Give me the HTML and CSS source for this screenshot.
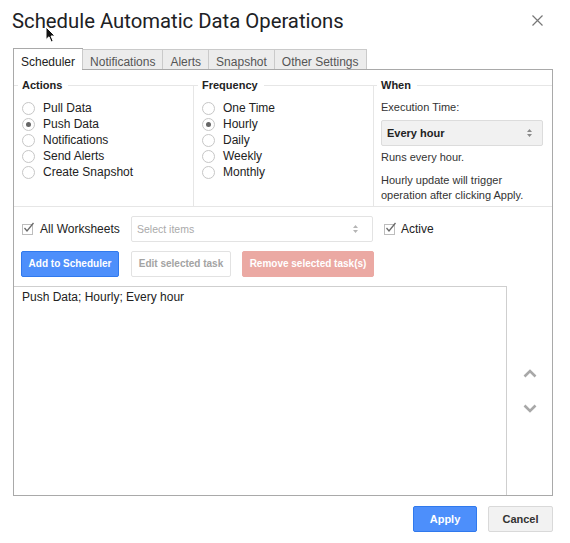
FILE: index.html
```html
<!DOCTYPE html>
<html lang="en">
<head>
<meta charset="utf-8">
<title>Schedule Automatic Data Operations</title>
<link rel="stylesheet" href="styles.css">
</head>
<body>
<div class="dialog">
  <header class="head">
    <h1 class="title">Schedule Automatic Data Operations</h1>
    <button class="close" aria-label="Close">
      <svg width="11" height="11" viewBox="0 0 11 11"><path d="M0.5 0.5 L10.5 10.5 M10.5 0.5 L0.5 10.5" stroke="#777" stroke-width="1.2" fill="none"/></svg>
    </button>
  </header>

  <nav class="tabs">
    <div class="tab active">Scheduler</div>
    <div class="tab">Notifications</div>
    <div class="tab">Alerts</div>
    <div class="tab">Snapshot</div>
    <div class="tab">Other Settings</div>
  </nav>

  <section class="panel">
    <div class="groups">
      <fieldset class="group group-actions">
        <legend>Actions</legend>
        <div class="options">
          <label class="opt"><span class="radio"></span>Pull Data</label>
          <label class="opt"><span class="radio on"></span>Push Data</label>
          <label class="opt"><span class="radio"></span>Notifications</label>
          <label class="opt"><span class="radio"></span>Send Alerts</label>
          <label class="opt"><span class="radio"></span>Create Snapshot</label>
        </div>
      </fieldset>
      <fieldset class="group group-freq">
        <legend>Frequency</legend>
        <div class="options">
          <label class="opt"><span class="radio"></span>One Time</label>
          <label class="opt"><span class="radio on"></span>Hourly</label>
          <label class="opt"><span class="radio"></span>Daily</label>
          <label class="opt"><span class="radio"></span>Weekly</label>
          <label class="opt"><span class="radio"></span>Monthly</label>
        </div>
      </fieldset>
      <fieldset class="group group-when">
        <legend>When</legend>
        <p class="when-label">Execution Time:</p>
        <div class="select select-when">
          <span>Every hour</span>
          <svg class="updown" width="7" height="10" viewBox="0 0 7 10"><path d="M3.5 1 L6 4 L1 4 Z M3.5 9 L6 6 L1 6 Z" fill="#8a8a8a"/></svg>
        </div>
        <p class="when-note">Runs every hour.</p>
        <p class="when-desc">Hourly update will trigger<br>operation after clicking Apply.</p>
      </fieldset>
    </div>

    <div class="filters">
      <label class="check check-all"><span class="box"><svg width="13" height="12" viewBox="0 0 13 12"><path d="M2.5 6 L5 9 L11.5 1" stroke="#6a6a6a" stroke-width="1.3" fill="none"/></svg></span>All Worksheets</label>
      <div class="select select-items">
        <span>Select items</span>
        <svg class="updown" width="7" height="10" viewBox="0 0 7 10"><path d="M3.5 1 L6 4 L1 4 Z M3.5 9 L6 6 L1 6 Z" fill="#b5b5b5"/></svg>
      </div>
      <label class="check check-active"><span class="box"><svg width="13" height="12" viewBox="0 0 13 12"><path d="M2.5 6 L5 9 L11.5 1" stroke="#6a6a6a" stroke-width="1.3" fill="none"/></svg></span>Active</label>
    </div>

    <div class="buttons">
      <button class="btn btn-primary btn-add">Add to Scheduler</button>
      <button class="btn btn-plain btn-edit">Edit selected task</button>
      <button class="btn btn-danger btn-remove">Remove selected task(s)</button>
    </div>

    <div class="tasks">
      <div class="task-list">Push Data; Hourly; Every hour</div>
      <div class="reorder">
        <svg width="14" height="9" viewBox="0 0 14 9"><path d="M1.5 7.5 L7 2 L12.5 7.5" stroke="#a8a8a8" stroke-width="2.6" fill="none"/></svg>
        <svg width="14" height="9" viewBox="0 0 14 9"><path d="M1.5 1.5 L7 7 L12.5 1.5" stroke="#a8a8a8" stroke-width="2.6" fill="none"/></svg>
      </div>
    </div>
  </section>

  <footer class="foot">
    <button class="btn btn-primary btn-apply">Apply</button>
    <button class="btn btn-cancel">Cancel</button>
  </footer>

  <svg class="cursor" width="12" height="18" viewBox="0 0 12 18"><path d="M1 1 L1 13.5 L4 10.8 L6.2 16 L8.2 15.1 L6 10 L10 10 Z" fill="#111" stroke="#fff" stroke-width="1"/></svg>
</div>
</body>
</html>
```

FILE: styles.css
```css
* { box-sizing: border-box; }

body {
  margin: 0;
  background: #fff;
  font-family: "Liberation Sans", Arial, sans-serif;
  color: #222;
}

.dialog {
  position: relative;
  width: 570px;
  height: 543px;
  padding: 8px 18px 0 13px;
}

.head {
  display: flex;
  align-items: center;
  justify-content: space-between;
  height: 24px;
  margin-bottom: 16px;
}

.title {
  margin: 1px 0 0 -1px;
  font: 400 20.3px/24px Roboto, "Liberation Sans", sans-serif;
  color: #202124;
}

.close {
  display: flex;
  padding: 0;
  margin: 0 9px 0 0;
  border: 0;
  background: none;
}

/* Tabs */
.tabs {
  position: relative;
  z-index: 1;
  display: flex;
  align-items: flex-start;
  height: 21px;
}

.tab {
  height: 20px;
  margin-top: 1px;
  margin-right: -1px;
  padding: 4px 7px 0;
  font-size: 12px;
  line-height: 16px;
  color: #555;
  background: #ececec;
  border: 1px solid #cacaca;
  border-bottom: 0;
}

.tab.active {
  height: 22px;
  margin-top: 0;
  padding-top: 5px;
  color: #222;
  background: #fff;
  border-color: #a9a9a9;
}

/* Panel */
.panel {
  width: 540px;
  border: 1px solid #a9a9a9;
}

.groups {
  display: flex;
  height: 137px;
  padding-top: 9px;
}

.group {
  margin: 0;
  min-width: 0;
  padding: 0 0 0 8px;
  border: 0;
  border-top: 1px solid #e6e6e6;
  border-right: 1px solid #e6e6e6;
  border-bottom: 1px solid #e6e6e6;
}

.group-actions { width: 180px; }
.group-freq { width: 180px; }
.group-when { width: 178px; border-right: 0; padding-left: 7px; }

.group legend {
  margin-left: -4px;
  padding: 0 6px 0 4px;
  font: 700 11px/13px "Liberation Sans", Arial, sans-serif;
  color: #222;
}

.options {
  display: flex;
  flex-direction: column;
  margin-top: 8px;
}

.opt {
  display: flex;
  align-items: center;
  gap: 8px;
  height: 16px;
  font-size: 12px;
  color: #222;
}

.radio {
  display: grid;
  place-items: center;
  flex: none;
  width: 13px;
  height: 13px;
  border: 1px solid #c6c6c6;
  border-radius: 50%;
  background: #fff;
}

.radio.on::after {
  content: "";
  width: 5px;
  height: 5px;
  border-radius: 50%;
  background: #666;
}

.when-label,
.when-note,
.when-desc {
  margin: 0;
  font-size: 11px;
  color: #333;
}

.when-label { margin-top: 7px; line-height: 16px; }
.when-note { margin-top: 3px; line-height: 16px; }
.when-desc { margin-top: 8px; line-height: 15px; }

.select {
  display: flex;
  align-items: center;
  justify-content: space-between;
  height: 26px;
  padding: 0 9px 0 5px;
  border-radius: 2px;
}

.select-when {
  width: 162px;
  margin-top: 5px;
  font-weight: 700;
  font-size: 11px;
  color: #222;
  background: #f1f1f1;
  border: 1px solid #dcdcdc;
}

.select-items {
  width: 242px;
  font-size: 10.5px;
  color: #aaa;
  background: #fff;
  border: 1px solid #e3e3e3;
  padding-right: 13px;
}

/* Filters row */
.filters {
  display: flex;
  align-items: center;
  height: 26px;
  margin-top: 9px;
  padding-left: 8px;
}

.check {
  display: flex;
  align-items: center;
  gap: 7px;
  font-size: 12px;
  color: #222;
}

.check-all { width: 109px; }
.check-active { margin-left: 11px; gap: 6px; }

.box {
  position: relative;
  flex: none;
  width: 11px;
  height: 11px;
  border: 1px solid #bdbdbd;
  background: #fff;
}

.box svg {
  position: absolute;
  left: -1px;
  top: -3px;
}

/* Buttons */
.buttons {
  display: flex;
  gap: 12px;
  height: 26px;
  margin-top: 9px;
  padding-left: 7px;
}

.btn {
  height: 26px;
  padding: 0;
  font: 700 10px/24px "Liberation Sans", Arial, sans-serif;
  text-align: center;
  border-radius: 2px;
  border: 1px solid transparent;
}

.btn-primary {
  color: #fff;
  background: #4d8ffb;
  border-color: #3079ed;
}

.btn-plain {
  color: #a3a3a3;
  background: #fff;
  border-color: #e2e2e2;
}

.btn-danger {
  color: #fff;
  background: #eba9a3;
  border-color: #eba9a3;
}

.btn-add { width: 98px; }
.btn-edit { width: 100px; }
.btn-remove { width: 132px; margin-left: -1px; }

/* Tasks */
.tasks {
  display: flex;
  height: 209px;
  margin-top: 9px;
}

.task-list {
  width: 493px;
  padding: 2px 8px;
  font-size: 12px;
  line-height: 16px;
  color: #222;
  border-top: 1px solid #cfcfcf;
  border-right: 1px solid #cfcfcf;
}

.reorder {
  flex: 1;
  display: flex;
  flex-direction: column;
  align-items: center;
  justify-content: center;
  gap: 26px;
  padding-left: 1px;
}

/* Footer */
.foot {
  display: flex;
  justify-content: flex-end;
  gap: 11px;
  width: 540px;
  margin-top: 10px;
}

.btn-apply { width: 64px; font-size: 11px; }

.btn-cancel {
  width: 65px;
  font-size: 11px;
  color: #333;
  background: #f2f2f2;
  border-color: #d9d9d9;
}

.cursor {
  position: absolute;
  left: 45px;
  top: 26px;
}
```
